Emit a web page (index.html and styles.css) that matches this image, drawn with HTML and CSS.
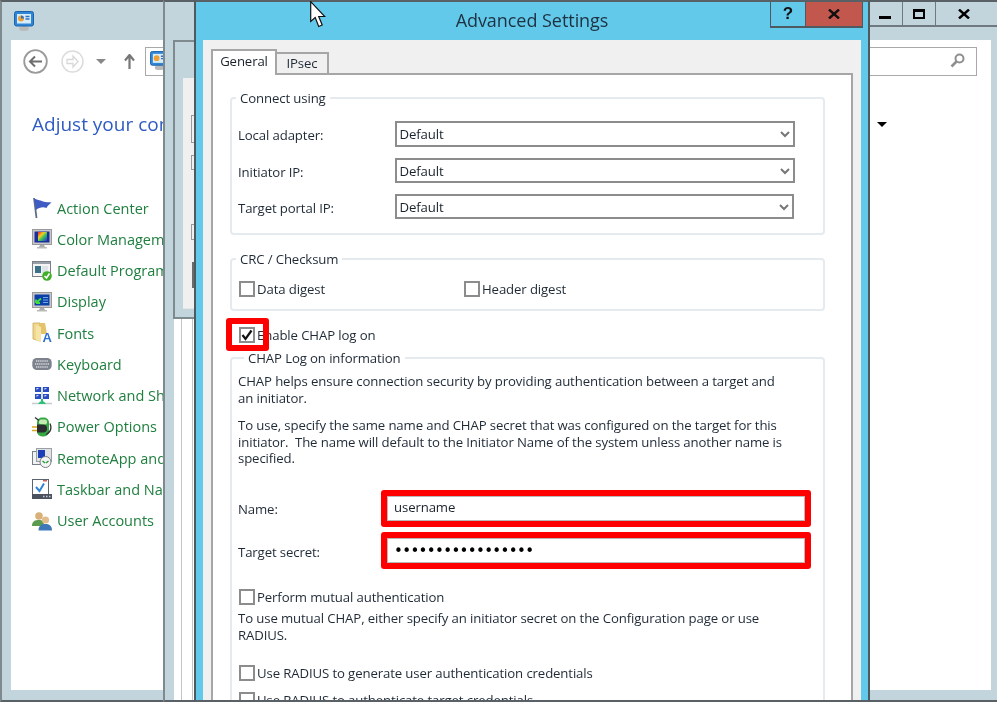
FILE: index.html
```html
<!DOCTYPE html>
<html lang="en">
<head>
<meta charset="utf-8">
<title>Advanced Settings</title>
<link rel="stylesheet" href="styles.css">
</head>
<body>
<div class="desktop">

  <!-- Control Panel window -->
  <section class="window main-window">
    <header class="main-titlebar">
      <svg class="app-icon" width="20" height="20" viewBox="0 0 20 20"><ellipse cx="10" cy="17.5" rx="5" ry="2.5" fill="#b9b9b9"/><rect x="0.5" y="0.5" width="19" height="14.5" rx="2" fill="#2f86d6" stroke="#1c62a8"/><rect x="3" y="3" width="14" height="9.5" fill="#d6ecfa"/><circle cx="7" cy="7.5" r="3" fill="#f0a030"/><path d="M7 7.5V4.5A3 3 0 0 1 10 7.5Z" fill="#2f70c0"/><path d="M11.500 5.500h4M11.500 8h4" stroke="#2f70c0" stroke-width="1.500"/></svg>
      <div class="caption-buttons">
        <div class="caption-btn"><span class="min-glyph"></span></div>
        <div class="caption-btn"><span class="max-glyph"></span></div>
        <div class="caption-btn caption-close"><svg width="12" height="10" viewBox="0 0 12 10"><path d="M1 0.500L11 9.500M11 0.500L1 9.500" stroke="#000" stroke-width="2.400"/></svg></div>
      </div>
    </header>
    <div class="main-client">
      <nav class="nav-row">
        <svg class="nav-back" width="25" height="25" viewBox="0 0 25 25"><circle cx="12.500" cy="12.500" r="11.300" fill="#fff" stroke="#9a9a9a" stroke-width="1.800"/><path d="M19 12.500H7M12 7.500L7 12.500L12 17.500" fill="none" stroke="#6e6e6e" stroke-width="2"/></svg>
        <svg class="nav-forward" width="23" height="23" viewBox="0 0 23 23"><circle cx="11.500" cy="11.500" r="10.500" fill="#fff" stroke="#dcdcdc" stroke-width="1.500"/><path d="M6 9.500H12V6L17 11.500L12 17V13.500H6Z" fill="none" stroke="#d8d8d8" stroke-width="1.300"/></svg>
        <span class="nav-drop"></span>
        <svg class="nav-up" width="11" height="15" viewBox="0 0 11 15"><path d="M5.500 15V2M1 6.500L5.500 1L10 6.500" fill="none" stroke="#777" stroke-width="2.200"/></svg>
        <div class="address-bar">
          <svg width="19" height="19" viewBox="0 0 20 20"><ellipse cx="10" cy="17.500" rx="5" ry="2.500" fill="#b9b9b9"/><rect x="0.500" y="0.500" width="19" height="14.500" rx="2" fill="#2f86d6" stroke="#1c62a8"/><rect x="3" y="3" width="14" height="9.500" fill="#d6ecfa"/><circle cx="7" cy="7.500" r="3" fill="#f0a030"/><path d="M11.500 5.500h4M11.500 8h4" stroke="#2f70c0" stroke-width="1.500"/></svg>
          <svg class="search-icon" width="15" height="15" viewBox="0 0 15 15"><circle cx="9.500" cy="5.500" r="4" fill="none" stroke="#8f8f8f" stroke-width="2"/><path d="M6.500 8.500L1.500 13.500" stroke="#8f8f8f" stroke-width="2.600"/></svg>
        </div>
      </nav>
      <div class="heading-row">
        <h1 class="page-heading">Adjust your computer's settings</h1>
        <span class="view-drop"></span>
      </div>
      <ul class="item-list">
        <li><svg width="20" height="22" viewBox="0 0 20 22"><path d="M2 1L4.500 21" stroke="#5c6a86" stroke-width="1.800"/><path d="M2 1.500C6 3 9 3.500 11 4.500C14 5.500 17 5 19.500 5.500C17 7.500 15.500 9 14.500 11C11 9.500 7 10.500 4 13Z" fill="#3f5cc4"/></svg>Action Center</li>
        <li><svg width="20" height="20" viewBox="0 0 20 20"><defs><linearGradient id="rb" x1="0" y1="0" x2="1" y2="1"><stop offset="0" stop-color="#f02020"/><stop offset=".35" stop-color="#f0d020"/><stop offset=".6" stop-color="#30c060"/><stop offset="1" stop-color="#3030d0"/></linearGradient></defs><rect x="0.500" y="0.500" width="19" height="15" fill="#c8c8c8" stroke="#9a9a9a"/><rect x="2.500" y="2.500" width="15" height="11" fill="#1a2f9c"/><rect x="6" y="3" width="9" height="9" fill="url(#rb)"/><path d="M8 16h4l1 2H7Z" fill="#aaa"/><rect x="5" y="18" width="10" height="1.500" fill="#bbb"/></svg>Color Management</li>
        <li><svg width="20" height="20" viewBox="0 0 20 20"><rect x="0.500" y="0.500" width="18" height="15" fill="#f4f4f4" stroke="#7a8088"/><rect x="1" y="1" width="17" height="2" fill="#9aa0a8"/><rect x="3" y="5" width="6" height="7" fill="#3a7088"/><rect x="10" y="5" width="6" height="7" fill="#dfe4e8"/><circle cx="15" cy="15" r="4.800" fill="#3fae2a"/><path d="M12.500 15L14.500 17L17.500 12.500" fill="none" stroke="#fff" stroke-width="1.600"/></svg>Default Programs</li>
        <li><svg width="20" height="20" viewBox="0 0 20 20"><rect x="0.500" y="0.500" width="19" height="15" fill="#c8c8c8" stroke="#9a9a9a"/><rect x="2.500" y="2.500" width="15" height="11" fill="#0c3fa8"/><path d="M4 11L9 6.500M4 11H8M4 11V7.500" fill="none" stroke="#3fe03a" stroke-width="1.800"/><path d="M11 5.500h5M11 8h5M11 10.500h5" stroke="#6fa8e8"/><path d="M8 16h4l1 2H7Z" fill="#aaa"/><rect x="5" y="18" width="10" height="1.500" fill="#bbb"/></svg>Display</li>
        <li><svg width="20" height="22" viewBox="0 0 20 22"><path d="M1 1H8V19L1 17Z" fill="#f0d78c" stroke="#c8a95a" stroke-width=".8"/><path d="M8 1H13L15 12H8Z" fill="#e6c26a"/><path d="M4 3L9 5V20L4 18Z" fill="#f6e3a6"/><text class="icon-letter" x="10.500" y="19.500">A</text></svg>Fonts</li>
        <li><svg width="20" height="13" viewBox="0 0 20 13"><rect x="0.300" y="0.500" width="19.400" height="12" rx="4.500" fill="#7d838d"/><path d="M4 3.500h12M3 6.500h14M4 9.500h12" stroke="#d6dade" stroke-width="1.500" stroke-dasharray="1.300 .8"/></svg>Keyboard</li>
        <li><svg width="20" height="20" viewBox="0 0 20 20"><path d="M10 1V16M0 17.500H20" stroke="#c4cece" stroke-width="1.300"/><rect x="3" y="1" width="6" height="5" fill="#2a4cc4"/><path d="M4.500 4L7 2H4.500Z" fill="#cfe0f8"/><rect x="11" y="1" width="6" height="5" fill="#2a4cc4"/><path d="M12.500 4L15 2H12.500Z" fill="#cfe0f8"/><rect x="3" y="8" width="6" height="5" fill="#2a4cc4"/><path d="M4.500 11L7 9H4.500Z" fill="#cfe0f8"/><rect x="11" y="8" width="6" height="5" fill="#2a4cc4"/><path d="M12.500 11L15 9H12.500Z" fill="#cfe0f8"/><path d="M6 18h8l-2-2.500h-1V13H9v2.500H8Z" fill="#2cc078"/></svg>Network and Sharing Center</li>
        <li><svg width="20" height="21" viewBox="0 0 20 21"><rect x="5" y="1" width="12" height="19" rx="5" fill="#35a844"/><rect x="7" y="3" width="8" height="5" rx="2" fill="#c2ecb2"/><path d="M3 1L7 4M18 7C20 12 18 16 14 18" fill="none" stroke="#333" stroke-width="1.300"/><path d="M0 10.500H5M0 14H5" stroke="#d8a820" stroke-width="1.600"/><path d="M5 8H11A4 4 0 0 1 11 16H5Z" fill="#2a2c30"/></svg>Power Options</li>
        <li><svg width="20" height="20" viewBox="0 0 20 20"><rect x="0.500" y="3.500" width="11" height="13" fill="#f2f2f2" stroke="#77808a"/><rect x="4.500" y="0.500" width="15" height="13" fill="#e2e2e2" stroke="#9aa0a8"/><rect x="6" y="2" width="7" height="8" fill="#1c3fb8"/><circle cx="13.500" cy="14" r="5.500" fill="#f4f4f4" stroke="#7a7f86"/><path d="M10.500 13L13 15M16.500 13L14 15" stroke="#2c9a3c" stroke-width="1.500"/></svg>RemoteApp and Desktop Connections</li>
        <li><svg width="20" height="20" viewBox="0 0 20 20"><rect x="0.500" y="0.500" width="16" height="15" fill="#fff" stroke="#5c6470"/><rect x="11" y="1" width="4" height="1.500" fill="#d06060"/><path d="M4 8L7.500 12L12 4.500" fill="none" stroke="#2f86d6" stroke-width="2"/><rect x="0" y="15" width="20" height="5" fill="#4a5260"/><path d="M11 17.500h1.500M14 17.500h1.500M17 17.500h1.500" stroke="#c8ccd0" stroke-width="1.500"/></svg>Taskbar and Navigation</li>
        <li><svg width="20" height="20" viewBox="0 0 20 20"><circle cx="7" cy="5" r="3.800" fill="#d8b078"/><path d="M0 15C0 10 3 9 7 9C10 9 12 10 12 15Z" fill="#5c9a50"/><circle cx="13.500" cy="9" r="3.600" fill="#e2bc8a"/><path d="M6.500 19.500C6.500 14.500 9.500 13 13.500 13C17 13 20 14.500 20 19.500Z" fill="#3f78b8"/></svg>User Accounts</li>
      </ul>
    </div>
  </section>

  <!-- Window between Control Panel and the dialog -->
  <section class="window middle-window">
    <div class="middle-client"></div>
  </section>
  <section class="window back-dialog">
    <div class="back-dialog-panel">
      <span class="stub stub-a"></span>
      <span class="stub stub-b"></span>
      <span class="stub stub-c"></span>
      <span class="stub stub-d"></span>
    </div>
  </section>

  <!-- Advanced Settings dialog -->
  <section class="window dialog">
    <header class="dialog-titlebar">
      <span></span>
      <h2 class="dialog-title">Advanced Settings</h2>
      <div class="dialog-buttons">
        <div class="dialog-btn help-btn">?</div>
        <div class="dialog-btn close-btn"><svg width="12" height="10" viewBox="0 0 12 10"><path d="M1 0.500L11 9.500M11 0.500L1 9.500" stroke="#111" stroke-width="2.400"/></svg></div>
      </div>
    </header>
    <div class="dialog-client">
      <div class="tabs">
        <div class="tab tab-active">General</div>
        <div class="tab">IPsec</div>
      </div>
      <div class="tab-panel">
        <fieldset class="group">
          <legend>Connect using</legend>
          <div class="adapter-grid">
            <span class="field-label">Local adapter:</span>
            <div class="select select-tall">Default<svg class="chevron" width="10" height="7" viewBox="0 0 10 7"><path d="M1 1L5 5L9 1" fill="none" stroke="#777" stroke-width="2"/></svg></div>
            <span class="field-label">Initiator IP:</span>
            <div class="select">Default<svg class="chevron" width="10" height="7" viewBox="0 0 10 7"><path d="M1 1L5 5L9 1" fill="none" stroke="#777" stroke-width="2"/></svg></div>
            <span class="field-label">Target portal IP:</span>
            <div class="select select-narrow">Default<svg class="chevron" width="10" height="7" viewBox="0 0 10 7"><path d="M1 1L5 5L9 1" fill="none" stroke="#777" stroke-width="2"/></svg></div>
          </div>
        </fieldset>

        <fieldset class="group group-crc">
          <legend>CRC / Checksum</legend>
          <div class="crc-row">
            <div class="check-row crc-cell"><span class="checkbox"></span>Data digest</div>
            <div class="check-row"><span class="checkbox"></span>Header digest</div>
          </div>
        </fieldset>

        <div class="check-row enable-row">
          <span class="checkbox"><svg width="12" height="12" viewBox="0 0 12 12"><path d="M1.500 6L4.500 10L10.500 1.500" fill="none" stroke="#111" stroke-width="2.200"/></svg></span>Enable CHAP log on
          <span class="annotation"></span>
        </div>

        <fieldset class="group group-chap">
          <legend>CHAP Log on information</legend>
          <p class="copy">CHAP helps ensure connection security by providing authentication between a target and<br>an initiator.</p>
          <p class="copy copy-second">To use, specify the same name and CHAP secret that was configured on the target for this<br>initiator.&nbsp; The name will default to the Initiator Name of the system unless another name is<br>specified.</p>
          <div class="credentials">
            <span>Name:</span>
            <div class="cred-input">username</div>
            <span class="secret-label">Target secret:</span>
            <div class="cred-input cred-secret">•••••••••••••••••</div>
          </div>
          <div class="check-row mutual-row"><span class="checkbox"></span>Perform mutual authentication</div>
          <p class="copy copy-mutual">To use mutual CHAP, either specify an initiator secret on the Configuration page or use<br>RADIUS.</p>
          <div class="check-row radius-row"><span class="checkbox"></span>Use RADIUS to generate user authentication credentials</div>
          <div class="check-row radius-row-next"><span class="checkbox"></span>Use RADIUS to authenticate target credentials</div>
        </fieldset>
      </div>
    </div>
  </section>

  <svg class="cursor" width="16" height="27" viewBox="0 0 16 27"><path d="M0.700 0.700V20.500L5.200 16.500L8.700 25.500L12.200 24L8.700 15.500H14.800Z" fill="#fff" stroke="#111" stroke-width="1.200"/></svg>
</div>
</body>
</html>
```
FILE: styles.css
```css
* { box-sizing: border-box; }

html, body {
  margin: 0;
  padding: 0;
  background: #fff;
}

.desktop {
  position: relative;
  width: 997px;
  height: 702px;
  overflow: hidden;
  font-family: "Open Sans", "Noto Sans", sans-serif;
  font-size: 13.2px;
  letter-spacing: -0.12px;
  color: #1f2a36;
  filter: blur(0.35px);
}

.window {
  position: absolute;
  top: 0;
  height: 702px;
  border-top: 2px solid #5a6166;
  border-bottom: 2px solid #5a6166;
  overflow: hidden;
}

/* Control Panel window */
.main-window {
  left: 0;
  width: 997px;
  display: flex;
  flex-direction: column;
  background: #c2d5dc;
  border-left: 2px solid #7f8a8f;
}

.main-titlebar {
  height: 38px;
  flex: none;
  display: flex;
  justify-content: space-between;
  align-items: flex-start;
}

.app-icon { margin: 9px 0 0 12px; }

.caption-buttons { display: flex; }

.caption-btn {
  width: 33px;
  height: 25px;
  border-right: 1px solid #6f7a80;
  border-bottom: 2px solid #6f7a80;
  display: flex;
  align-items: center;
  justify-content: center;
}

.caption-close { width: 61px; border-right: 0; padding-right: 5px; }

.min-glyph { width: 12px; height: 3px; margin: 7px 3px 0 0; background: #000; }

.max-glyph { width: 12px; height: 10px; border: 2px solid #000; border-top-width: 3px; }

.main-client {
  flex: 1;
  margin: 0 6px 10px 9px;
  background: #fff;
}

.nav-row {
  display: flex;
  align-items: center;
  height: 29px;
  margin: 7px 14px 0 12px;
}

.nav-forward { margin-left: 13px; }

.nav-drop {
  margin-left: 12px;
  border-left: 5px solid transparent;
  border-right: 5px solid transparent;
  border-top: 5px solid #888;
}

.nav-up { margin-left: 18px; }

.address-bar {
  flex: 1;
  align-self: stretch;
  margin-left: 10px;
  padding: 0 11px 2px 4px;
  border: 1.5px solid #a9a9a9;
  display: flex;
  align-items: center;
  justify-content: space-between;
}

.heading-row {
  display: flex;
  align-items: center;
  justify-content: space-between;
  margin: 33px 104px 0 21px;
}

.page-heading {
  margin: 0;
  font-size: 19px;
  font-weight: 400;
  letter-spacing: 0;
  line-height: 30px;
  color: #2f5bc4;
}

.view-drop {
  border-left: 5.5px solid transparent;
  border-right: 5.5px solid transparent;
  border-top: 5.5px solid #000;
}

.item-list {
  list-style: none;
  margin: 53.5px 0 0 21px;
  padding: 0;
  font-size: 14.5px;
  letter-spacing: 0;
  color: #1f7f3f;
}

.item-list li {
  height: 31.25px;
  display: flex;
  align-items: center;
  white-space: nowrap;
  position: relative;
  padding-left: 25px;
}

.item-list svg {
  position: absolute;
  left: 0;
  top: 50%;
  transform: translateY(-50%);
}

.icon-letter {
  font-family: "Liberation Sans", sans-serif;
  font-size: 13px;
  font-weight: 700;
  fill: #2f6fd0;
}

/* Middle window */
.middle-window {
  left: 163px;
  width: 40px;
  background: #c2d5dc;
  border-left: 2px solid #7f8a8f;
  padding: 38px 0 0 9px;
}

.middle-client {
  height: 660px;
  background: #fff;
}

.middle-client::after {
  content: "";
  display: block;
  width: 10px;
  height: 100%;
  margin-left: 7px;
  border-left: 1px solid #c4c4c4;
  border-right: 1px solid #c4c4c4;
}

.back-dialog {
  left: 173px;
  top: 40px;
  width: 30px;
  height: 279px;
  border-top: 2px solid #7f8a8f;
  border-bottom: 2px solid #7f8a8f;
  border-left: 2px solid #7f8a8f;
  background: #c2d5dc;
  padding: 36px 0 0 8px;
}

.back-dialog-panel {
  height: 231px;
  background: #f0f0f0;
  border-bottom: 1px solid #e6e6e6;
  padding: 37px 0 0 8px;
}

.stub {
  display: block;
  width: 6px;
  border: 1px solid #9a9a9a;
}

.stub-a { height: 28px; }
.stub-b { height: 15px; margin-top: 12px; }
.stub-c { height: 16px; margin-top: 54px; }
.stub-d { height: 26px; margin: 22px 0 0 1px; background: #6a6a6a; border-color: #6a6a6a; }

/* Dialog */
.dialog {
  left: 194px;
  width: 676px;
  background: #63c9ea;
  border-left: 2px solid #4f5a60;
  border-right: 2px solid #4f5a60;
}

.dialog-titlebar {
  height: 38px;
  display: grid;
  grid-template-columns: 1fr auto 1fr;
  align-items: start;
}

.dialog-title {
  margin: 0;
  font-size: 18px;
  font-weight: 400;
  letter-spacing: -0.05px;
  line-height: 36px;
  color: #1e3140;
}

.dialog-buttons {
  display: flex;
  justify-content: flex-end;
  margin-right: 5px;
}

.dialog-btn {
  height: 26px;
  display: flex;
  align-items: center;
  justify-content: center;
  border: 1.5px solid #4f5a60;
  border-top: 0;
  border-bottom-width: 2px;
}

.help-btn {
  width: 35px;
  border-right: 0;
  font-family: "Liberation Sans", sans-serif;
  font-size: 17px;
  font-weight: 700;
  color: #111;
}

.close-btn { width: 58px; background: #c2574e; }

.dialog-client {
  height: 660px;
  margin: 0 7px;
  padding: 9px 8px 0;
  background: #f0f0f0;
}

.tabs {
  display: flex;
  align-items: flex-end;
  height: 24px;
}

.tab {
  width: 52px;
  height: 21px;
  text-align: center;
  line-height: 18px;
  background: #f0f0f0;
  border: 2px solid #a6a6a6;
  border-left: 0;
  border-bottom: 0;
}

.tab-active {
  position: relative;
  z-index: 1;
  width: 66px;
  height: 26px;
  margin-bottom: -2px;
  line-height: 20px;
  background: #fff;
  border-left: 2px solid #a6a6a6;
  color: #1a222c;
}

.tab-panel {
  height: 640px;
  padding: 15px 26px 0 17px;
  background: #fff;
  border: 2px solid #a6a6a6;
}

.group {
  min-width: 0;
  margin: 0;
  padding: 15px 0 14px 6px;
  border: 2px solid #e4eaee;
  border-radius: 4px;
}

.group legend {
  margin-left: -2px;
  padding: 0 4px;
  line-height: 16px;
}

.adapter-grid {
  display: grid;
  grid-template-columns: 156.5px 1fr;
  row-gap: 11px;
  align-items: center;
  padding-right: 28px;
}

.field-label { padding-top: 2px; }

.select {
  position: relative;
  height: 25px;
  padding-left: 3px;
  line-height: 23px;
  color: #1a222c;
  border: 2px solid #8c8c8c;
}

.select-tall { height: 26px; }
.select-narrow { margin-right: 1px; }

.chevron {
  position: absolute;
  right: 3px;
  top: 8px;
}

.group-crc {
  margin-top: 16px;
  padding: 14px 0 12px 7px;
}

.group-crc legend { margin-left: -3px; }

.crc-row { display: flex; }
.crc-cell { width: 225px; }

.check-row {
  position: relative;
  display: flex;
  align-items: center;
  height: 16px;
  white-space: nowrap;
}

.checkbox {
  flex: none;
  width: 16px;
  height: 16px;
  margin-right: 2px;
  display: flex;
  align-items: center;
  justify-content: center;
  background: #fff;
  border: 2px solid #8c8c8c;
}

.enable-row { margin: 16px 0 7px 9px; }

.annotation {
  position: absolute;
  left: -13px;
  top: -9px;
  width: 43px;
  height: 33px;
  border: 6px solid #f00;
  border-radius: 3px;
}

.group-chap {
  height: 400px;
  padding: 7px 0 0 6px;
}

.group-chap legend { margin-left: 6px; }

.copy {
  margin: 0;
  line-height: 16.5px;
  white-space: nowrap;
}

.copy-second { margin-top: 11px; }

.credentials {
  display: grid;
  grid-template-columns: 143px 430px;
  row-gap: 5px;
  align-items: center;
  margin-top: 23.5px;
}

.secret-label { padding-top: 2px; }

.cred-input {
  height: 37px;
  padding: 0 0 3px 7px;
  display: flex;
  align-items: center;
  color: #1a222c;
  border: 6px solid #f00;
  border-radius: 3px;
  box-shadow: inset 0 0 0 1px #b8b8b8;
}

.cred-secret {
  font-family: "DejaVu Sans", sans-serif;
  font-size: 15px;
  letter-spacing: -0.65px;
  color: #000;
  padding-bottom: 0;
}

.mutual-row { margin: 20px 0 0 1px; }
.copy-mutual { margin-top: 5px; }
.radius-row { margin: 22px 0 0 1px; }
.radius-row-next { margin: 11px 0 0 1px; }

.cursor {
  position: absolute;
  left: 310px;
  top: 1px;
}
```
